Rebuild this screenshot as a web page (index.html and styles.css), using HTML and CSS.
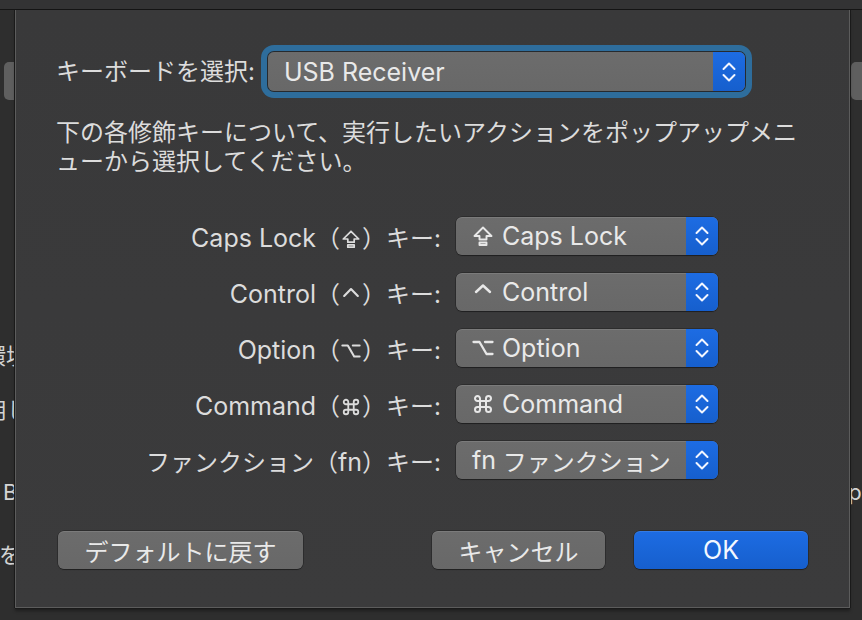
FILE: index.html
```html
<!DOCTYPE html>
<html lang="ja">
<head>
<meta charset="utf-8">
<title>修飾キー</title>
<link rel="stylesheet" href="styles.css">
</head>
<body>
<div class="backdrop">
  <div class="titlebar"></div>
  <div class="bg-ctl bg-ctl-left"></div>
  <div class="bg-ctl bg-ctl-right"></div>
  <span class="bg-text bg-t1">環境シ</span>
  <span class="bg-text bg-t2">用し</span>
  <span class="bg-text bg-t3">BT</span>
  <span class="bg-text bg-t4">を選</span>
  <span class="bg-text bg-t5">ip</span>
</div>

<div class="sheet">
  <div class="kb-row">
    <span class="kb-label">キーボードを選択:</span>
    <div class="popup popup-main">
      <span class="popup-text"><span class="lat">USB Receiver</span></span>
      <span class="stepper">
        <svg width="16" height="26" viewBox="0 0 16 26"><path d="M2.5 10 L8 4.5 L13.5 10 M2.5 16 L8 21.5 L13.5 16" fill="none" stroke="#f2f6ff" stroke-width="2" stroke-linecap="round" stroke-linejoin="round"/></svg>
      </span>
    </div>
  </div>

  <p class="desc">下の各修飾キーについて、実行したいアクションをポップアップメニ<br>ューから選択してください。</p>

  <div class="keys">
    <span class="key-label"><span class="lat">Caps Lock</span>（<svg class="lsym" width="20" height="20" viewBox="0 0 22 20" role="img" aria-label="⇪"><path d="M11 1.5 L19.5 10 H14.5 V13.5 H7.5 V10 H2.5 Z M7.5 16.5 H14.5 V19 H7.5 Z" fill="none" stroke="#dcdcdc" stroke-width="1.9" stroke-linejoin="round"/></svg>）キー:</span>
    <div class="popup">
      <span class="popup-text"><svg class="sym" width="22" height="20" viewBox="0 0 22 20"><path d="M11 1.5 L19.5 10 H14.5 V13.5 H7.5 V10 H2.5 Z M7.5 16.5 H14.5 V19 H7.5 Z" fill="none" stroke="#e8e8e8" stroke-width="1.9" stroke-linejoin="round"/></svg><span class="lat">Caps Lock</span></span>
      <span class="stepper"><svg width="16" height="26" viewBox="0 0 16 26"><path d="M2.5 10 L8 4.5 L13.5 10 M2.5 16 L8 21.5 L13.5 16" fill="none" stroke="#f2f6ff" stroke-width="2" stroke-linecap="round" stroke-linejoin="round"/></svg></span>
    </div>

    <span class="key-label"><span class="lat">Control</span>（<svg class="lsym" width="20" height="20" viewBox="0 0 22 20" role="img" aria-label="⌃"><path d="M3.5 11 L11 3.5 L18.5 11" fill="none" stroke="#dcdcdc" stroke-width="2.4" stroke-linecap="round" stroke-linejoin="round"/></svg>）キー:</span>
    <div class="popup">
      <span class="popup-text"><svg class="sym" width="22" height="20" viewBox="0 0 22 20"><path d="M4 10 L11 3.5 L18 10" fill="none" stroke="#e8e8e8" stroke-width="2.4" stroke-linecap="round" stroke-linejoin="round"/></svg><span class="lat">Control</span></span>
      <span class="stepper"><svg width="16" height="26" viewBox="0 0 16 26"><path d="M2.5 10 L8 4.5 L13.5 10 M2.5 16 L8 21.5 L13.5 16" fill="none" stroke="#f2f6ff" stroke-width="2" stroke-linecap="round" stroke-linejoin="round"/></svg></span>
    </div>

    <span class="key-label"><span class="lat">Option</span>（<svg class="lsym" width="20" height="20" viewBox="0 0 22 20" role="img" aria-label="⌥"><path d="M1.5 4 H7.5 L14.5 16 H20.5 M13 4 H20.5" fill="none" stroke="#dcdcdc" stroke-width="2.3" stroke-linecap="round" stroke-linejoin="round"/></svg>）キー:</span>
    <div class="popup">
      <span class="popup-text"><svg class="sym" width="22" height="20" viewBox="0 0 22 20"><path d="M1.5 4 H7.5 L14.5 16 H20.5 M13 4 H20.5" fill="none" stroke="#e8e8e8" stroke-width="2.3" stroke-linecap="round" stroke-linejoin="round"/></svg><span class="lat">Option</span></span>
      <span class="stepper"><svg width="16" height="26" viewBox="0 0 16 26"><path d="M2.5 10 L8 4.5 L13.5 10 M2.5 16 L8 21.5 L13.5 16" fill="none" stroke="#f2f6ff" stroke-width="2" stroke-linecap="round" stroke-linejoin="round"/></svg></span>
    </div>

    <span class="key-label"><span class="lat">Command</span>（<svg class="lsym" width="20" height="20" viewBox="-1 0 22 20" role="img" aria-label="⌘"><path d="M7 7 V4.5 A2.5 2.5 0 1 0 4.5 7 H15.5 A2.5 2.5 0 1 0 13 4.5 V15.5 A2.5 2.5 0 1 0 15.5 13 H4.5 A2.5 2.5 0 1 0 7 15.5 Z" fill="none" stroke="#dcdcdc" stroke-width="2" stroke-linejoin="round"/></svg>）キー:</span>
    <div class="popup">
      <span class="popup-text"><svg class="sym" width="22" height="20" viewBox="-1 0 22 20"><path d="M7 7 V4.5 A2.5 2.5 0 1 0 4.5 7 H15.5 A2.5 2.5 0 1 0 13 4.5 V15.5 A2.5 2.5 0 1 0 15.5 13 H4.5 A2.5 2.5 0 1 0 7 15.5 Z" fill="none" stroke="#e8e8e8" stroke-width="2" stroke-linejoin="round"/></svg><span class="lat">Command</span></span>
      <span class="stepper"><svg width="16" height="26" viewBox="0 0 16 26"><path d="M2.5 10 L8 4.5 L13.5 10 M2.5 16 L8 21.5 L13.5 16" fill="none" stroke="#f2f6ff" stroke-width="2" stroke-linecap="round" stroke-linejoin="round"/></svg></span>
    </div>

    <span class="key-label">ファンクション（<span class="lat">fn</span>）キー:</span>
    <div class="popup">
      <span class="popup-text"><span class="lat">fn</span>&nbsp;ファンクション</span>
      <span class="stepper"><svg width="16" height="26" viewBox="0 0 16 26"><path d="M2.5 10 L8 4.5 L13.5 10 M2.5 16 L8 21.5 L13.5 16" fill="none" stroke="#f2f6ff" stroke-width="2" stroke-linecap="round" stroke-linejoin="round"/></svg></span>
    </div>
  </div>

  <div class="actions">
    <button class="btn btn-default">デフォルトに戻す</button>
    <button class="btn btn-cancel">キャンセル</button>
    <button class="btn btn-ok"><span class="lat">OK</span></button>
  </div>
</div>
</body>
</html>
```

FILE: styles.css
```css
* { box-sizing: border-box; }

html, body {
  margin: 0;
  padding: 0;
}

body {
  width: 862px;
  height: 620px;
  overflow: hidden;
  position: relative;
  background: #2b2b2b;
  font-family: Inter, "Noto Sans CJK JP", "DejaVu Sans", sans-serif;
  color: #dedede;
}

.backdrop {
  position: absolute;
  inset: 0;
  background: #2e2e2e;
}

.titlebar {
  height: 10px;
  background: #333334;
  border-bottom: 1px solid #151515;
}

.bg-ctl {
  position: absolute;
  top: 62px;
  width: 24px;
  height: 38px;
  border-radius: 5px;
  background: #5f5f5f;
}
.bg-ctl-left { left: 4px; }
.bg-ctl-right { left: 851px; }

.bg-text {
  position: absolute;
  font-size: 22px;
  color: #d4d4d4;
  white-space: nowrap;
}
.bg-t1 { left: -16px; top: 338px; }
.bg-t2 { left: -15px; top: 392px; }
.bg-t3 { left: 3px; top: 479px; }
.bg-t4 { left: -1px; top: 537px; }
.bg-t5 { left: 843px; top: 479px; }

.sheet {
  position: absolute;
  left: 15px;
  top: 10px;
  width: 835px;
  height: 598px;
  background: linear-gradient(#39393a, #3b3b3c);
  border: 1px solid #5c5c5c;
  border-top: none;
  box-shadow: -1px 0 0 #1a1a1a, 1px 0 0 #1a1a1a, 0 1px 0 #1a1a1a, 0 3px 3px rgba(0,0,0,0.35);
  padding: 42px 41px 0 40px;
  display: flex;
  flex-direction: column;
}

.lat {
  font-size: 25px;
}

.kb-row {
  display: flex;
  align-items: center;
  gap: 13px;
}

.kb-label {
  font-size: 24px;
  line-height: 30px;
  color: #dcdcdc;
}

.popup {
  display: flex;
  height: 38px;
  border-radius: 6px;
  background: linear-gradient(#6c6c6c, #686868);
  box-shadow: 0 0 0 0.5px rgba(0,0,0,0.45), 0 1px 1px rgba(0,0,0,0.3), inset 0 1px 0 rgba(255,255,255,0.1);
}

.popup-main {
  width: 477px;
  height: 39px;
  box-shadow: 0 0 0 1px #262a2e, 0 0 0 7px #2e6d9c;
}

.popup-text {
  flex: 1;
  display: flex;
  align-items: center;
  padding-left: 16px;
  font-size: 24px;
  color: #e9e9e9;
  white-space: nowrap;
}

.popup-main .popup-text {
  padding-left: 16px;
}

.sym {
  margin-right: 8px;
  flex: none;
}

.stepper {
  width: 32px;
  flex: none;
  display: flex;
  align-items: center;
  justify-content: center;
  border-radius: 0 6px 6px 0;
  background: linear-gradient(#1d6ce3, #165fcd);
}

.desc {
  margin: 27px 0 0;
  font-size: 24px;
  line-height: 29px;
  color: #dcdcdc;
}

.keys {
  margin-top: 41px;
  display: grid;
  grid-template-columns: 385px 262px;
  grid-auto-rows: 38px;
  column-gap: 15px;
  row-gap: 18px;
  align-items: center;
}

.key-label {
  text-align: right;
  font-size: 24px;
  color: #dcdcdc;
  white-space: nowrap;
}

.lsym {
  vertical-align: -2px;
  margin: 0 1px;
}

.actions {
  margin-top: 52px;
  display: flex;
  gap: 29px;
}

.btn {
  height: 38px;
  border: none;
  border-radius: 6px;
  font-family: Inter, "Noto Sans CJK JP", sans-serif;
  font-size: 24px;
  color: #e9e9e9;
  background: linear-gradient(#6c6c6c, #686868);
  box-shadow: 0 0 0 0.5px rgba(0,0,0,0.45), 0 1px 1px rgba(0,0,0,0.3), inset 0 1px 0 rgba(255,255,255,0.1);
  padding: 0;
}

.btn-default {
  width: 245px;
  margin-left: 2px;
  margin-right: auto;
}

.btn-cancel {
  width: 173px;
}

.btn-ok {
  width: 174px;
  color: #f4f8ff;
  background: linear-gradient(#1d6ce3, #165fcd);
}
```
